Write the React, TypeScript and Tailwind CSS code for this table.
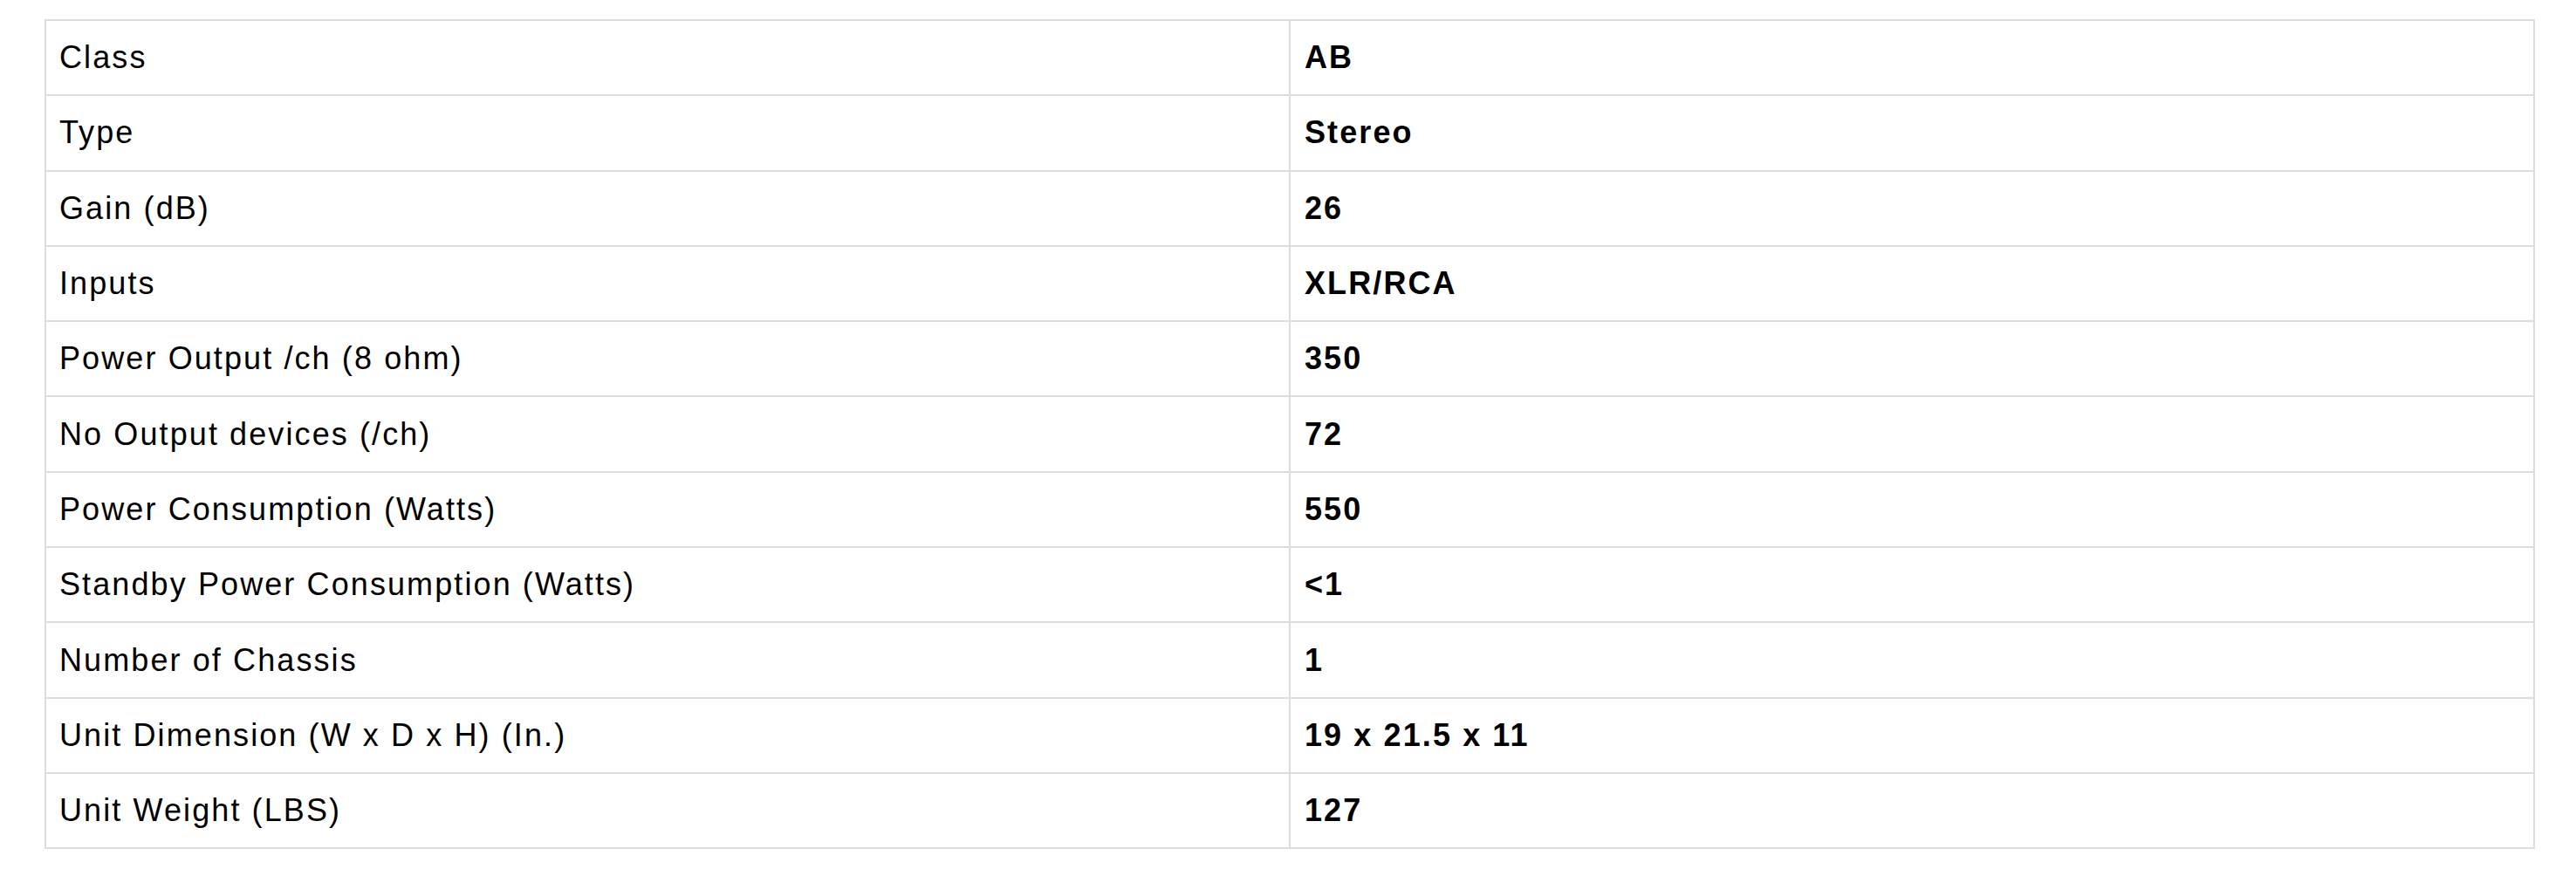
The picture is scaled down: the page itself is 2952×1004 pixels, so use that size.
import React from "react";

const rows: [string, string][] = [
  ["Class", "AB"],
  ["Type", "Stereo"],
  ["Gain (dB)", "26"],
  ["Inputs", "XLR/RCA"],
  ["Power Output /ch (8 ohm)", "350"],
  ["No Output devices (/ch)", "72"],
  ["Power Consumption (Watts)", "550"],
  ["Standby Power Consumption (Watts)", "<1"],
  ["Number of Chassis", "1"],
  ["Unit Dimension (W x D x H) (In.)", "19 x 21.5 x 11"],
  ["Unit Weight (LBS)", "127"],
];

export default function App() {
  return (
    <div className="w-[2952px] h-[1004px] bg-white pl-[51px] pr-[47px] pt-[22px]">
      <table
        className="w-full table-fixed border-collapse text-black text-[36px] tracking-[2.1px]"
        style={{ fontFamily: '"Liberation Sans", Arial, Helvetica, sans-serif' }}
      >
        <tbody>
          {rows.map(([k, v]) => (
            <tr key={k} className="h-[86.3px]">
              <td className="w-1/2 border-2 border-[#dddddd] pl-[15px] pr-[15px] py-0 align-middle leading-[40px]">
                {k}
              </td>
              <td className="w-1/2 border-2 border-[#dddddd] pl-[16px] pr-[15px] py-0 align-middle leading-[40px] font-bold">
                {v}
              </td>
            </tr>
          ))}
        </tbody>
      </table>
    </div>
  );
}
